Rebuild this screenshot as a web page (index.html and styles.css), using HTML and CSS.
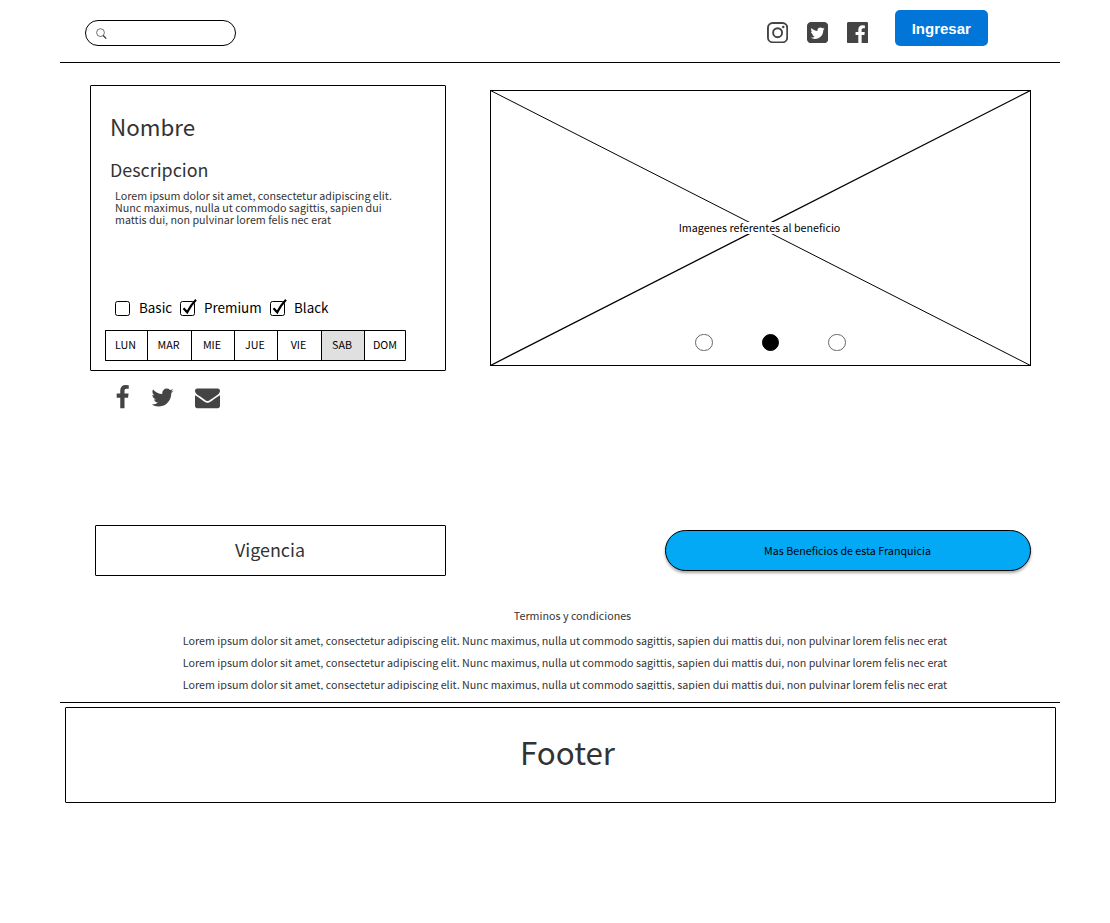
FILE: index.html
```html
<!DOCTYPE html>
<html lang="es">
<head>
<meta charset="utf-8">
<title>Beneficio</title>
<link rel="stylesheet" href="styles.css">
</head>
<body>
<div class="page">
  <header class="header">
    <div class="search">
      <svg width="12" height="12" viewBox="0 0 12 12" fill="none" stroke="#333"><circle cx="4.500" cy="4.600" r="3.900" stroke-width=".7"/><path d="M7.200 7.500L10.200 10.600" stroke-width="1.300"/></svg>
    </div>
    <nav class="networks">
      <svg viewBox="128 128 1536 1536"><g fill="none" stroke="#444"><rect x="197" y="197" width="1398" height="1398" rx="350" stroke-width="138"/><circle cx="896" cy="896" r="325" stroke-width="138"/></g><circle cx="1306" cy="486" r="92" fill="#444"/></svg>
      <svg viewBox="128 128 1536 1536"><path d="M1408 610q-56 25-121 34 68-40 93-117-65 38-134 51-61-66-153-66-87 0-148.5 61.5t-61.5 148.5q0 29 5 48-129-7-242-65t-192-155q-29 50-29 106 0 114 91 175-47-1-100-26v2q0 75 50 133.5t123 72.5q-29 8-51 8-13 0-39-4 21 63 74.5 104t121.5 42q-116 90-261 90-26 0-50-3 148 94 322 94 112 0 210-35.5t168-95 120.5-137 75-162 24.5-168.5q0-18-1-27 63-45 105-109zm256-194v960q0 119-84.5 203.5t-203.5 84.5h-960q-119 0-203.5-84.5t-84.5-203.5v-960q0-119 84.5-203.5t203.5-84.5h960q119 0 203.5 84.5t84.5 203.5z"/></svg>
      <svg viewBox="128 128 1536 1536"><path d="M1579 128q35 0 60 25t25 60v1366q0 35-25 60t-60 25h-391v-595h199l30-232h-229v-148q0-56 23.5-84t91.5-28l122-1v-207q-63-9-178-9-136 0-217.5 80t-81.5 226v171h-200v232h200v595h-735q-35 0-60-25t-25-60v-1366q0-35 25-60t60-25h1366z"/></svg>
    </nav>
    <button class="login">Ingresar</button>
  </header>

  <main class="main">
    <section class="left">
      <article class="card">
        <h1 class="name">Nombre</h1>
        <h2 class="subtitle">Descripcion</h2>
        <p class="description">Lorem ipsum dolor sit amet, consectetur adipiscing elit.<br>Nunc maximus, nulla ut commodo sagittis, sapien dui<br>mattis dui, non pulvinar lorem felis nec erat</p>
        <div class="levels">
          <span class="level basic"><svg width="20" height="20" viewBox="0 0 20 20"><rect class="box" x=".5" y="3.5" width="14" height="14" rx="2"/></svg><span>Basic</span></span>
          <span class="level premium"><svg width="20" height="20" viewBox="0 0 20 20"><rect class="box" x=".5" y="3.5" width="14" height="14" rx="2"/><path class="tick" d="M3.500 10.300L7.200 14.300Q10.500 7.500 16 1.800"/></svg><span>Premium</span></span>
          <span class="level black"><svg width="20" height="20" viewBox="0 0 20 20"><rect class="box" x=".5" y="3.5" width="14" height="14" rx="2"/><path class="tick" d="M3.500 10.300L7.200 14.300Q10.500 7.500 16 1.800"/></svg><span>Black</span></span>
        </div>
        <div class="days"><span>LUN</span><span>MAR</span><span>MIE</span><span>JUE</span><span>VIE</span><span class="selected">SAB</span><span>DOM</span></div>
      </article>
      <div class="share">
        <svg viewBox="0 0 1792 1792"><path d="M1343 12v264h-157q-86 0-116 36t-30 108v189h293l-39 296h-254v759h-306v-759h-255v-296h255v-218q0-186 104-288.500t277-102.500q147 0 228 12z"/></svg>
        <svg viewBox="0 0 1792 1792"><path d="M1684 408q-67 98-162 167 1 14 1 42 0 130-38 259.500t-115.500 248.500-184.500 210.500-258 146-323 54.500q-271 0-496-145 35 4 78 4 225 0 401-138-105-2-188-64.500t-114-159.500q33 5 61 5 43 0 85-11-112-23-185.500-111.500t-73.500-205.500v-4q68 38 146 41-66-44-105-115t-39-154q0-88 44-163 121 149 294.500 238.500t371.500 99.500q-8-38-8-74 0-134 94.500-228.500t228.500-94.500q140 0 236 102 109-21 205-78-37 115-142 178 93-10 186-50z"/></svg>
        <svg class="mail" viewBox="0 0 1792 1792"><path d="M1792 710v794q0 66-47 113t-113 47h-1472q-66 0-113-47t-47-113v-794q44 49 101 87 362 246 497 345 57 42 92.500 65.500t94.500 48 110 24.500h2q51 0 110-24.500t94.500-48 92.500-65.500q170-123 498-345 57-39 100-87zm0-294q0 79-49 151t-122 123q-376 261-468 325-10 7-42.500 31t-54 38.500-52 32.500-57.500 27-50 9h-2q-23 0-50-9t-57.500-27-52-32.500-54-38.500-42.500-31q-91-64-262-182.500t-205-142.500q-62-42-117-115.500t-55-136.500q0-78 41.500-130t118.500-52h1472q65 0 112.500 47t47.500 113z"/></svg>
      </div>
    </section>
    <section class="gallery">
      <svg class="cross" width="541" height="276" viewBox="0 0 541 276"><path d="M.5 .5L540.500 275.500" stroke-width="1"/><path d="M.5 275.500L540.500 .5" stroke-width="1.300"/></svg>
      <span class="caption">Imagenes referentes al beneficio</span>
      <div class="dots"><i></i><i class="active"></i><i></i></div>
    </section>
  </main>

  <div class="actions">
    <div class="validity">Vigencia</div>
    <button class="more">Mas Beneficios de esta Franquicia</button>
  </div>

  <section class="terms">
    <h3>Terminos y condiciones</h3>
    <div class="terms-text">
      <p>Lorem ipsum dolor sit amet, consectetur adipiscing elit. Nunc maximus, nulla ut commodo sagittis, sapien dui mattis dui, non pulvinar lorem felis nec erat</p>
      <p>Lorem ipsum dolor sit amet, consectetur adipiscing elit. Nunc maximus, nulla ut commodo sagittis, sapien dui mattis dui, non pulvinar lorem felis nec erat</p>
      <p>Lorem ipsum dolor sit amet, consectetur adipiscing elit. Nunc maximus, nulla ut commodo sagittis, sapien dui mattis dui, non pulvinar lorem felis nec erat</p>
    </div>
  </section>
  <footer class="footer"><div class="footer-box">Footer</div></footer>
</div>
</body>
</html>
```
FILE: styles.css
```css
* { box-sizing: border-box; }
body { margin: 0; background: #fff; font-family: "Noto Sans CJK SC", "Noto Sans", sans-serif; font-size: 10.730px; color: #333; }
h1, h2, h3, p { margin: 0; font-weight: 400; }
svg { display: block; flex: none; }
.page { width: 1000px; margin-left: 60px; }

.header { display: flex; align-items: flex-start; height: 63px; padding-left: 25px; border-bottom: 1px solid #000; }
.search { width: 151px; height: 26px; margin-top: 20px; padding: 7px 10px; border: 1px solid #000; border-radius: 13px; }
.networks { display: flex; gap: 18.800px; margin: 21.700px 0 0 530.800px; }
.networks svg { width: 21.200px; height: 21.400px; fill: #444; }
.login { width: 93px; height: 36px; margin: 10px 0 0 26.800px; padding: 0; border: 0; border-radius: 5px; background: #0275d8; color: #fff; font: bold 15px "Liberation Sans", Arial, sans-serif; }

.main { display: flex; align-items: flex-start; height: 462px; padding: 22px 0 0 30px; }
.left { width: 356px; }
.card { height: 286px; padding: 24px 0 0 14px; border: 1px solid #000; border-radius: 1px; }
.name { margin-left: 5px; font-size: 22.380px; line-height: 32px; }
.subtitle { margin: 14px 0 0 5px; font-size: 17.900px; line-height: 26px; }
.description { height: 96px; margin: 8px 0 0 10px; line-height: 12px; white-space: nowrap; }
.levels { display: flex; height: 20px; margin: 12px 0 0 10px; color: #000; font-size: 13.430px; line-height: 18px; }
.level { display: flex; gap: 4px; white-space: nowrap; }
.basic { width: 65px; }
.premium { width: 90px; }
.box { fill: none; stroke: #000; }
.tick { fill: none; stroke: #000; stroke-width: 2.200; }
.days { display: grid; grid-template-columns: 42px 44px 43px 43px 44px 43px 41px; width: 301px; height: 31px; margin-top: 12px; border: 1px solid #000; border-right: 0; border-radius: 1px; color: #000; line-height: 28px; text-align: center; }
.days span { padding-right: 2px; border-right: 1px solid #000; }
.days span:last-child { padding: 0; }
.days .selected { background: #e0e0e0; }
.share { display: flex; gap: 15px; padding: 14px 0 0 20px; }
.share svg { width: 25px; height: 25px; fill: #444; }
.share .mail { margin-left: 5px; }

.gallery { position: relative; display: flex; flex-direction: column; align-items: center; width: 541px; height: 276px; margin: 5px 0 0 44px; border: 1px solid #000; }
.cross { position: absolute; left: -1px; top: -1px; stroke: #000; fill: none; }
.caption { position: relative; height: 12px; margin: 131px 2px 0 0; background: #fff; color: #000; line-height: 11px; }
.dots { position: relative; display: flex; gap: 49px; margin: 99.500px 0 0 20px; }
.dots i { width: 17.500px; height: 17.500px; border: 1px solid #666; border-radius: 50%; background: #fff; }
.dots .active { border-color: #000; background: #000; }

.actions { display: flex; justify-content: space-between; height: 76px; padding: 0 29px 0 35px; }
.validity { width: 351px; height: 51px; padding-right: 1px; border: 1px solid #000; border-radius: 1px; font-size: 17.900px; line-height: 46px; text-align: center; }
.more { width: 366px; height: 41px; margin-top: 5px; padding: 0 1px 0 0; border: 1px solid #000; border-radius: 21px; background: #03a9f4; box-shadow: 0 2px 3px rgba(0, 0, 0, .35); color: #000; font: inherit; }

.terms { height: 102px; border-bottom: 1px solid #000; }
.terms h3 { padding: 4px 0 0 25px; font-size: inherit; line-height: 22px; text-align: center; }
.terms-text { height: 61px; margin-top: 2px; padding: 1px 0 0 10px; overflow: hidden; line-height: 22px; text-align: center; white-space: nowrap; }
.footer { padding: 4px 4px 0 5px; }
.footer-box { height: 96px; padding-left: 14px; border: 1px solid #000; border-radius: 1px; font-size: 31.330px; line-height: 88px; text-align: center; }
```
